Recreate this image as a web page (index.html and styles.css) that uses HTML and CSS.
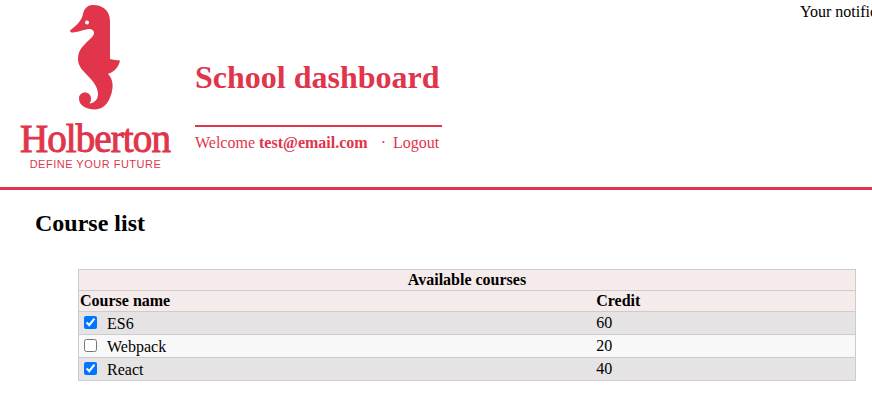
FILE: index.html
```html
<!DOCTYPE html>
<html lang="en">
  <head>
    <meta charset="UTF-8" />
    <meta name="viewport" content="width=device-width, initial-scale=1.0" />
    <link rel="stylesheet" href="styles.css">
    <title>School dashboard</title>
  </head>

  <body>
    <div class="notifications">Your notifications</div>

    <header class="app-header">
      <div class="logo">
        <svg class="seahorse" viewBox="65 0 60 112" width="60" height="112" aria-hidden="true">
          <path d="M93 5 C103 5 110 11 110 21 L110 59 C113 60 117 60 120 60.5 C119 67 114 72 108 74 C112 78 113 83 112.5 88 C111 101 104 109.500 95 109.500 C87 109.500 79 106 79 98.500 C79 95 81.500 92.500 85 92.500 C88.500 92.500 91 95 91 98.500 C91 100.500 90.500 102 89.500 103.500 C94 103 98 100 98 94 C98 87 93 81 87 75 C81 69 78 65 78 59 C78 50 83 46 88 41 C91 38 94 36 94 33 C94 30 91 28.500 88 29 C83 30 76 32.500 72 32.500 C70.500 32.500 69.500 31 70.500 30 C76 26 81 21 82.500 16 C83.500 11 85.500 5 93 5 Z" fill="#e0354b" />
          <circle cx="87" cy="22.500" r="2" fill="#fff" />
        </svg>
        <div class="wordmark">Holberton</div>
        <div class="tagline">DEFINE YOUR FUTURE</div>
      </div>

      <div class="header-text">
        <h1>School dashboard</h1>
        <p class="welcome">Welcome <b>test@email.com</b><span class="dot">·</span><a href="#">Logout</a></p>
      </div>
    </header>

    <main class="content">
      <h2>Course list</h2>

      <table class="courses">
        <thead>
          <tr>
            <th colspan="2">Available courses</th>
          </tr>
          <tr>
            <th class="name-col">Course name</th>
            <th>Credit</th>
          </tr>
        </thead>
        <tbody>
          <tr>
            <td><input type="checkbox" checked />ES6</td>
            <td>60</td>
          </tr>
          <tr>
            <td><input type="checkbox" />Webpack</td>
            <td>20</td>
          </tr>
          <tr>
            <td><input type="checkbox" checked />React</td>
            <td>40</td>
          </tr>
        </tbody>
      </table>
    </main>
  </body>
</html>
```

FILE: styles.css
```css
html {
  overflow: hidden;
}

body {
  font-family: "Liberation Serif", serif;
  font-size: 16px;
  margin: 0;
  color: #000;
  background-color: #fff;
}

.notifications {
  position: absolute;
  top: 3px;
  left: 800px;
  white-space: nowrap;
}

.app-header {
  display: flex;
  height: 187px;
  border-bottom: 3px solid #e0354b;
  color: #e0354b;
}

.logo {
  display: flex;
  flex-direction: column;
  align-items: center;
  width: 190px;
  flex-shrink: 0;
}

.seahorse {
  display: block;
}

.wordmark {
  font-size: 39px;
  line-height: 30px;
  letter-spacing: -0.9px;
  margin-top: 12px;
  -webkit-text-stroke: 1px #e0354b;
}

.tagline {
  font-family: "Liberation Sans", sans-serif;
  font-size: 11px;
  line-height: 13px;
  letter-spacing: 0.5px;
  margin: 4px 0 0 1px;
}

.header-text {
  margin-left: 5px;
  width: 247px;
}

h1 {
  font-size: 32px;
  margin: 59px 0 29px;
}

.welcome {
  margin: 0;
  padding-top: 7px;
  border-top: 2px solid #e0354b;
  white-space: nowrap;
}

.dot {
  margin: 0 7px 0 13px;
}

.welcome a {
  color: inherit;
  text-decoration: none;
}

.content {
  padding: 20px 16px 0 35px;
}

h2 {
  font-size: 24px;
  margin: 0 0 32px;
}

.courses {
  width: 778px;
  margin-left: 43px;
  border-collapse: collapse;
  border: 1px solid #ccc;
}

.courses tr {
  border-bottom: 1px solid #ccc;
}

.courses th,
.courses td {
  padding: 1px;
  text-align: left;
}

.courses thead tr {
  background-color: #f5ebea;
}

.courses thead th[colspan] {
  text-align: center;
}

.name-col {
  width: 66.500%;
}

.courses tbody tr {
  background-color: #e5e3e4;
}

.courses tbody tr:nth-child(2) {
  background-color: #f8f8f8;
}

.courses input {
  margin: 3px 10px 3px 4px;
}
```
